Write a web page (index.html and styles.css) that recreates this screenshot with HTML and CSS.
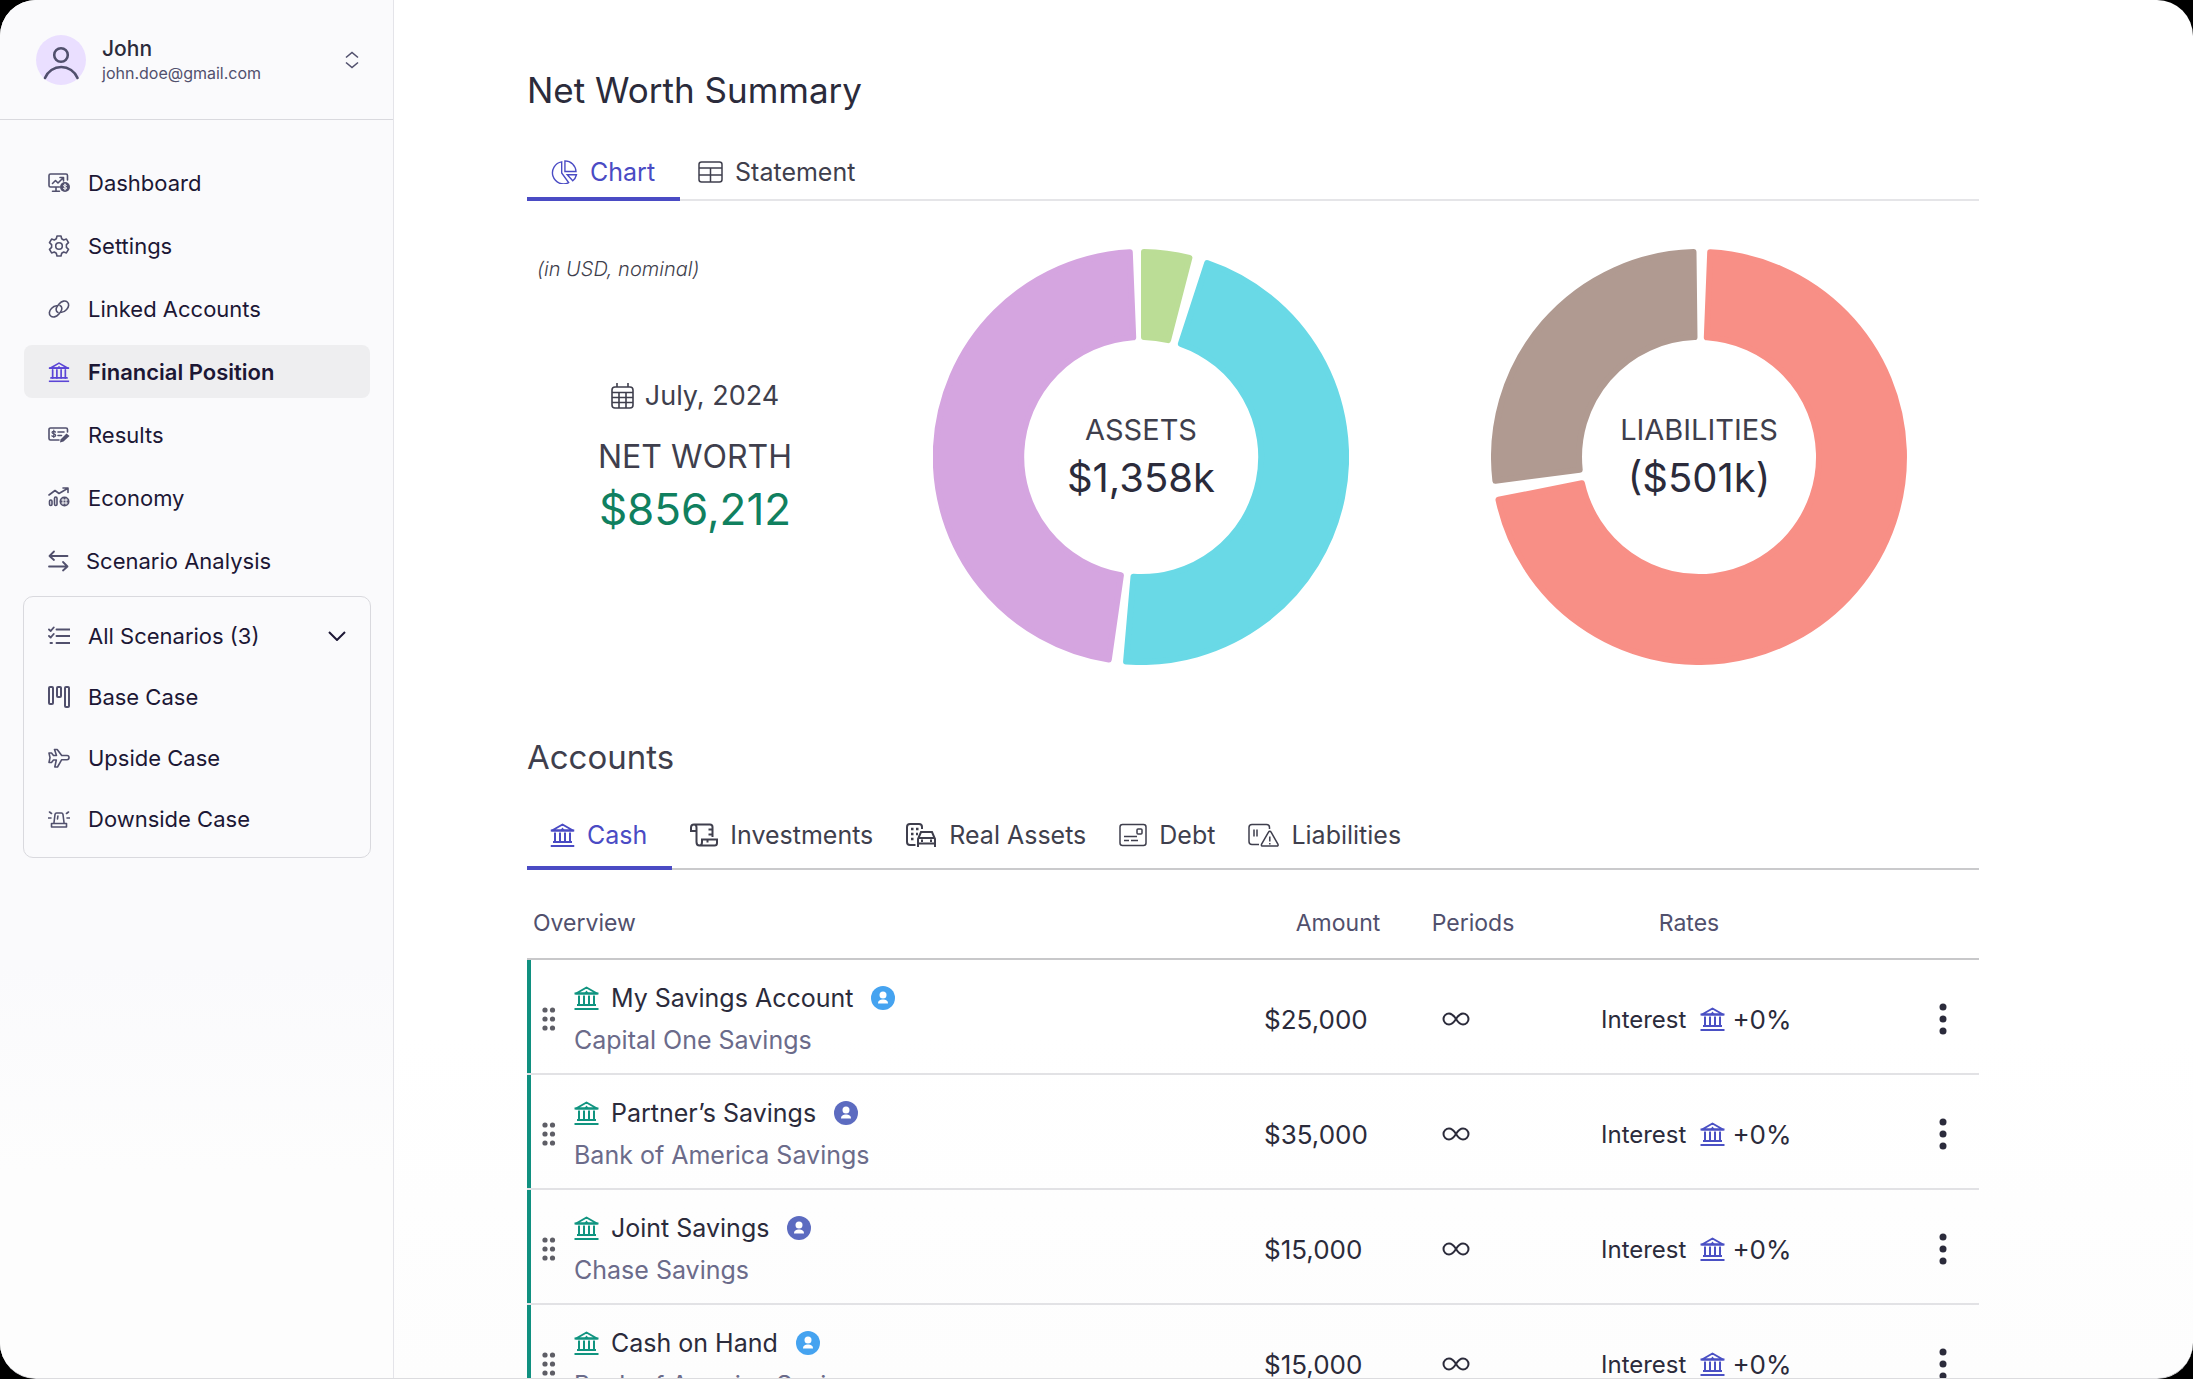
FILE: index.html
```html
<!DOCTYPE html>
<html lang="en">
<head>
<meta charset="utf-8">
<title>Net Worth Summary</title>
<link rel="stylesheet" href="styles.css">
</head>
<body>
<svg class="sprite" aria-hidden="true">
  <symbol id="bank" viewBox="0 0 24 24">
    <path d="M1.5 7.5 12 1.5l10.500 6z" fill="none" stroke="currentColor" stroke-width="2" stroke-linejoin="round"/>
    <path d="M12 4.500l2 2.500h-4z" fill="currentColor"/>
    <path d="M0 7.500h24M2.500 19h19M0 23h24" stroke="currentColor" stroke-width="2"/>
    <path d="M4.500 9.500V19M9.500 9.500V19M14.500 9.500V19M19.500 9.500V19" stroke="currentColor" stroke-width="2"/>
  </symbol>
  <symbol id="person" viewBox="0 0 24 24">
    <circle cx="12" cy="12" r="12" fill="currentColor"/>
    <circle cx="12" cy="9" r="3.500" fill="#fff"/>
    <path d="M7 17.500c0-3 2.200-4 5-4s5 1 5 4z" fill="#fff"/>
  </symbol>
  <symbol id="grip" viewBox="0 0 14 24">
    <g fill="currentColor"><circle cx="3" cy="3" r="2.600"/><circle cx="10.500" cy="3" r="2.600"/><circle cx="3" cy="12" r="2.600"/><circle cx="10.500" cy="12" r="2.600"/><circle cx="3" cy="21" r="2.600"/><circle cx="10.500" cy="21" r="2.600"/></g>
  </symbol>
  <symbol id="infinity" viewBox="0 0 28 16">
    <path d="M14 8C11.500 4 9.500 2.500 7 2.500a5.500 5.500 0 0 0 0 11c2.500 0 4.500-1.500 7-5.500s4.500-5.500 7-5.500a5.500 5.500 0 0 1 0 11c-2.500 0-4.500-1.500-7-5.500z" fill="none" stroke="currentColor" stroke-width="2"/>
  </symbol>
  <symbol id="kebab" viewBox="0 0 8 32">
    <g fill="currentColor"><circle cx="4" cy="4" r="3.500"/><circle cx="4" cy="16" r="3.500"/><circle cx="4" cy="28" r="3.500"/></g>
  </symbol>
</svg>

<div class="app">
  <aside class="sidebar">
    <button class="profile" type="button">
      <svg class="avatar" viewBox="0 0 50 50" aria-hidden="true">
        <circle cx="25" cy="25" r="25" fill="#eadfff"/>
        <g fill="none" stroke="#51506d" stroke-width="2.600" stroke-linecap="round"><circle cx="25" cy="20" r="6.800"/><path d="M9 43a17.500 17.500 0 0 1 32.500 0"/></g>
      </svg>
      <span class="profile-text">
        <span class="profile-name">John</span>
        <span class="profile-mail">john.doe@gmail.com</span>
      </span>
      <svg class="profile-switch" viewBox="0 0 14 18" aria-hidden="true"><path d="M1 6.500 7 1.500l6 5M1 11.500l6 5 6-5" fill="none" stroke="currentColor" stroke-width="1.600"/></svg>
    </button>

    <nav class="nav" aria-label="Main">
      <a class="nav-item" href="#dashboard">
        <svg class="nav-icon" viewBox="0 0 22 22" aria-hidden="true"><path d="M11.500 15H2.500A1.500 1.500 0 0 1 1 13.500v-10A1.500 1.500 0 0 1 2.500 2h15.500A1.500 1.500 0 0 1 19.500 3.500V8M8 15v4M4.500 19.300h7M4.500 11.500l3-3 2.500 2.500 5-5M12 5.500h3.500V9"/><circle cx="17" cy="15" r="5" class="solid"/><path class="cut" d="M18.500 13.300c-.8-.8-3-.7-3 .4 0 1.500 3.200.8 3.200 2.400 0 1.200-2.400 1.200-3.300.3M17 12v6"/></svg>
        Dashboard
      </a>
      <a class="nav-item" href="#settings">
        <svg class="nav-icon" viewBox="0 0 22 22" aria-hidden="true"><circle cx="11" cy="11" r="3.300"/><path d="M9 1h4l.7 2.800 2 1.200 2.700-.9 2.100 3.500-2.100 2v2.800l2.100 2-2.100 3.500-2.700-.9-2 1.200L13 21H9l-.7-2.800-2-1.200-2.700.9-2.100-3.500 2.100-2V9.600l-2.100-2 2.100-3.500L6.300 5l2-1.200z"/></svg>
        Settings
      </a>
      <a class="nav-item" href="#linked">
        <svg class="nav-icon" viewBox="0 0 22 22" aria-hidden="true"><path d="M10 14.500c-2.200-1-2.500-4-.5-6.500l1.800-2.200c2.500-3 6-3.500 8-1.800s1.800 4.800-.7 7.500c-1.500 1.700-3.500 3-5.600 2.800"/><path d="M12 7.500c2.200 1 2.500 4 .5 6.500l-1.800 2.200c-2.500 3-6 3.500-8 1.800S.9 13.200 3.400 10.500C4.900 8.800 6.900 7.500 9 7.700"/></svg>
        Linked Accounts
      </a>
      <a class="nav-item is-active" href="#position" aria-current="page">
        <svg class="nav-icon" viewBox="-1 -1 26 26" aria-hidden="true"><use href="#bank" width="24" height="24"/></svg>
        Financial Position
      </a>
      <a class="nav-item" href="#results">
        <svg class="nav-icon" viewBox="0 0 22 22" aria-hidden="true"><path d="M11 16H2.500A1.500 1.500 0 0 1 1 14.500v-9A1.500 1.500 0 0 1 2.500 4h15.500A1.500 1.500 0 0 1 19.500 5.500V8M10 8h6M10 11.500h3.500"/><path d="M7.500 8c-1-.9-3.500-.8-3.500.6 0 1.700 3.700.9 3.700 2.800 0 1.400-2.800 1.400-3.900.4M5.800 6v7.500" stroke-width="1.200"/><path class="solid" d="m12.500 15.500 6-6 3 2.500-6 5.500-3.500 1z"/></svg>
        Results
      </a>
      <a class="nav-item" href="#economy">
        <svg class="nav-icon" viewBox="0 0 22 22" aria-hidden="true"><path d="M1 8l6-4.500 4 3 8.500-5M15 1h5v4.500"/><rect x="1.500" y="13" width="2.500" height="5.500" rx="1.200"/><rect x="6.500" y="10" width="2.500" height="8.500" rx="1.200"/><circle cx="16.500" cy="14.500" r="5" class="solid"/><path class="cut" d="M15 11.800v5.400M18 11.800v5.400M13.800 13h5.400M13.800 16h5.400"/></svg>
        Economy
      </a>
      <a class="nav-item nav-item-tight" href="#scenarios">
        <svg class="nav-icon" viewBox="0 0 22 22" aria-hidden="true"><path d="M19.500 6H1.500M6 1.500 1.500 6 6 10M1 16.500h18.500M15 12l4.500 4.500-4.500 4" stroke-width="1.800"/></svg>
        Scenario Analysis
      </a>
    </nav>

    <nav class="scenarios" aria-label="Scenarios">
      <button class="scenario" type="button" aria-expanded="true">
        <svg class="nav-icon" viewBox="0 0 22 22" aria-hidden="true"><path d="M8.500 4.500H22M8.500 11H22M8.500 18H22M1 4.500 2.700 6l3-3.500M1 11l1.700 1.500 3-3.500M2.500 18h1.500" stroke-width="1.900"/></svg>
        All Scenarios (3)
        <svg class="scenario-chevron" viewBox="0 0 18 10" aria-hidden="true"><path d="m1 1 8 8 8-8" fill="none" stroke="currentColor" stroke-width="2"/></svg>
      </button>
      <a class="scenario" href="#base">
        <svg class="nav-icon" viewBox="0 0 22 22" aria-hidden="true"><g stroke-width="2"><rect x="1" y="1" width="4" height="17" rx="1"/><rect x="9" y="1" width="4" height="10" rx="1"/><rect x="17" y="1" width="4" height="20" rx="1"/></g></svg>
        Base Case
      </a>
      <a class="scenario" href="#upside">
        <svg class="nav-icon" viewBox="0 0 22 22" aria-hidden="true"><path d="M8.500 8.500 6.500 2.500h2.700l4.500 6H19c2.700 0 2.700 4.200 0 4.200h-5.300L9.500 20H6.800l1.500-7H5.500l-2 2.500H1L2 10.600 1 6h2.500l2 2.500z"/></svg>
        Upside Case
      </a>
      <a class="scenario" href="#downside">
        <svg class="nav-icon" viewBox="0 0 22 22" aria-hidden="true"><path d="M6 14.500 7 6.500C7.200 5.500 7.500 5 8.500 5h5c1 0 1.300.5 1.500 1.500l1 8M9.500 11l.4-3M3.500 15.500h15V19h-15zM.5 10H3M19 10h2.500M1.500 4 3.500 5.500M20.500 4l-2 1.500"/></svg>
        Downside Case
      </a>
    </nav>
  </aside>

  <main class="main">
    <section class="summary">
      <h1 class="title">Net Worth Summary</h1>
      <div class="tabs tabs-summary" role="tablist">
        <button class="tab is-active" role="tab" aria-selected="true" type="button">
          <svg class="tab-icon tab-icon-wide" viewBox="0 0 28 26" aria-hidden="true"><path d="M11.500 2A12 12 0 1 0 19 24.500L11.500 14zM15 1v11.500h12A12 12 0 0 0 15 1zM17.500 16H27.500a12 12 0 0 1-4 6.500z"/></svg>
          Chart
        </button>
        <button class="tab" role="tab" aria-selected="false" type="button">
          <svg class="tab-icon" viewBox="0 0 25 24" aria-hidden="true"><rect x="1" y="2" width="23" height="20" rx="2.500"/><path d="M1 8h23M1 15h23M12.500 8v14"/></svg>
          Statement
        </button>
      </div>

      <div class="figures">
        <div class="net">
          <p class="unit-note">(in USD, nominal)</p>
          <div class="net-block">
            <p class="net-date">
              <svg class="calendar" viewBox="0 0 24 26" aria-hidden="true"><rect x="1" y="4" width="21" height="21" rx="3"/><path d="M1 9.500h21M1 14.500h21M1 19.500h21M8 9.500V25M15 9.500V25M6 0v4M17 0v4"/></svg>
              July, 2024
            </p>
            <p class="net-label">NET WORTH</p>
            <p class="net-value">$856,212</p>
          </div>
        </div>
        <div class="donut">
          <svg class="donut-chart" viewBox="0 0 416 416" role="img" aria-label="Assets breakdown">
            <path class="slice slice-green" d="M211 3A205 205 0 0 1 256.400 8.800L235.100 91.100A120 120 0 0 0 211 88z"/>
            <path class="slice slice-cyan" d="M274.200 14A205 205 0 0 1 193.100 412.500L200.500 327.800A120 120 0 0 0 247.900 94.800z"/>
            <path class="slice slice-purple" d="M175.800 410.500A205 205 0 0 1 196.800 3.300L200.200 88.300A120 120 0 0 0 187.900 326.300z"/>
          </svg>
          <div class="donut-text"><span class="donut-label">ASSETS</span><span class="donut-value">$1,358k</span></div>
        </div>
        <div class="donut">
          <svg class="donut-chart" viewBox="0 0 416 416" role="img" aria-label="Liabilities breakdown">
            <path class="slice slice-red" d="M219.200 3.300A205 205 0 1 1 7.500 250.800L90.900 234.200A120 120 0 1 0 215.800 88.300z"/>
            <path class="slice slice-brown" d="M4.400 231.800A205 205 0 0 1 202.500 3.100L203.500 88.100A120 120 0 0 0 88.700 220.700z"/>
          </svg>
          <div class="donut-text"><span class="donut-label">LIABILITIES</span><span class="donut-value">($501k)</span></div>
        </div>
      </div>
    </section>

    <section class="accounts">
      <h2 class="title subtitle">Accounts</h2>
      <div class="tabs tabs-accounts" role="tablist">
        <button class="tab is-active" role="tab" aria-selected="true" type="button">
          <svg class="tab-icon" viewBox="0 0 24 24" aria-hidden="true"><use href="#bank"/></svg>
          Cash
        </button>
        <button class="tab" role="tab" aria-selected="false" type="button">
          <svg class="tab-icon tab-icon-wide" viewBox="0 0 28 24" aria-hidden="true"><g stroke-width="2"><path d="M6.500 8H1V4.500C1 2.500 2 1.500 4 1.500H20c2 0 2.500 1 2.500 2.500V14M4 1.500c2 0 2.500 1 2.500 3V19c0 2.500 1 3.500 3 3.500h15c2 0 2.500-.5 2.500-2.500V16.500H12V19c0 2.500-1 3.500-2.500 3.500M18.500 6.500H22M18.500 11.500H22M17.500 19.500v-3"/></g></svg>
          Investments
        </button>
        <button class="tab" role="tab" aria-selected="false" type="button">
          <svg class="tab-icon tab-icon-xl" viewBox="0 0 31 24" aria-hidden="true"><g stroke-width="2"><path d="M9.500 22H4C2 22 1 21 1 19V4C1 2 2 1 4 1h9c2 0 3 1 3 3v2"/><path d="M12 24v-8l3-7h11l3 7v8M12 20.500h17M12 15h17"/><path d="M5 6h2.500M5 11h2.500M5 16h2.500M10 6h2.500M10 11h2M15 17.700h2M24 17.700h2" stroke-width="2.600"/></g></svg>
          Real Assets
        </button>
        <button class="tab" role="tab" aria-selected="false" type="button">
          <svg class="tab-icon tab-icon-wide" viewBox="0 0 28 24" aria-hidden="true"><rect x="1" y="1.500" width="26" height="21" rx="2.500"/><rect x="18" y="6" width="5" height="5" rx="1"/><path d="M5 13.500h13M5 17.500h5M12 17.500h7"/></svg>
          Debt
        </button>
        <button class="tab" role="tab" aria-selected="false" type="button">
          <svg class="tab-icon tab-icon-xl" viewBox="0 0 31 24" aria-hidden="true"><path d="M11 21.500H4C2 21.500 1 20.500 1 18.500V4.500C1 2.500 2 1.500 4 1.500h14.500c2 0 3 1 3 3V6M6 6.500v7M9 6.500v7M20.500 9.200c.6-1.200 2-1.200 2.600 0l6.800 12c.6 1.200 0 1.900-1 1.900H14.600c-1 0-1.600-.7-1-1.900zM21.800 13.500v5M21.800 20v1.500"/></svg>
          Liabilities
        </button>
      </div>

      <table class="table">
        <colgroup><col><col class="col-amount"><col class="col-periods"><col class="col-rates"><col class="col-menu"></colgroup>
        <thead>
          <tr><th class="th-overview" scope="col">Overview</th><th scope="col">Amount</th><th scope="col">Periods</th><th scope="col">Rates</th><th scope="col" aria-label="Actions"></th></tr>
        </thead>
        <tbody>
          <tr>
            <td class="overview"><div class="account"><svg class="grip" aria-hidden="true"><use href="#grip"/></svg><div class="account-text"><div class="account-name"><svg class="bank" aria-hidden="true"><use href="#bank"/></svg>My Savings Account<svg class="owner owner-me" aria-hidden="true"><use href="#person"/></svg></div><div class="account-bank">Capital One Savings</div></div></div></td>
            <td class="amount">$25,000</td>
            <td class="periods"><svg class="infinity" role="img" aria-label="Indefinite"><use href="#infinity"/></svg></td>
            <td class="rates"><div class="rate">Interest<svg class="bank" aria-hidden="true"><use href="#bank"/></svg><span class="rate-value">+0%</span></div></td>
            <td class="menu"><button class="menu-button" type="button" aria-label="Account actions"><svg class="kebab" aria-hidden="true"><use href="#kebab"/></svg></button></td>
          </tr>
          <tr>
            <td class="overview"><div class="account"><svg class="grip" aria-hidden="true"><use href="#grip"/></svg><div class="account-text"><div class="account-name"><svg class="bank" aria-hidden="true"><use href="#bank"/></svg>Partner’s Savings<svg class="owner owner-partner" aria-hidden="true"><use href="#person"/></svg></div><div class="account-bank">Bank of America Savings</div></div></div></td>
            <td class="amount">$35,000</td>
            <td class="periods"><svg class="infinity" role="img" aria-label="Indefinite"><use href="#infinity"/></svg></td>
            <td class="rates"><div class="rate">Interest<svg class="bank" aria-hidden="true"><use href="#bank"/></svg><span class="rate-value">+0%</span></div></td>
            <td class="menu"><button class="menu-button" type="button" aria-label="Account actions"><svg class="kebab" aria-hidden="true"><use href="#kebab"/></svg></button></td>
          </tr>
          <tr>
            <td class="overview"><div class="account"><svg class="grip" aria-hidden="true"><use href="#grip"/></svg><div class="account-text"><div class="account-name"><svg class="bank" aria-hidden="true"><use href="#bank"/></svg>Joint Savings<svg class="owner owner-partner" aria-hidden="true"><use href="#person"/></svg></div><div class="account-bank">Chase Savings</div></div></div></td>
            <td class="amount">$15,000</td>
            <td class="periods"><svg class="infinity" role="img" aria-label="Indefinite"><use href="#infinity"/></svg></td>
            <td class="rates"><div class="rate">Interest<svg class="bank" aria-hidden="true"><use href="#bank"/></svg><span class="rate-value">+0%</span></div></td>
            <td class="menu"><button class="menu-button" type="button" aria-label="Account actions"><svg class="kebab" aria-hidden="true"><use href="#kebab"/></svg></button></td>
          </tr>
          <tr>
            <td class="overview"><div class="account"><svg class="grip" aria-hidden="true"><use href="#grip"/></svg><div class="account-text"><div class="account-name"><svg class="bank" aria-hidden="true"><use href="#bank"/></svg>Cash on Hand<svg class="owner owner-me" aria-hidden="true"><use href="#person"/></svg></div><div class="account-bank">Bank of America Savings</div></div></div></td>
            <td class="amount">$15,000</td>
            <td class="periods"><svg class="infinity" role="img" aria-label="Indefinite"><use href="#infinity"/></svg></td>
            <td class="rates"><div class="rate">Interest<svg class="bank" aria-hidden="true"><use href="#bank"/></svg><span class="rate-value">+0%</span></div></td>
            <td class="menu"><button class="menu-button" type="button" aria-label="Account actions"><svg class="kebab" aria-hidden="true"><use href="#kebab"/></svg></button></td>
          </tr>
        </tbody>
      </table>
    </section>
  </main>
</div>
</body>
</html>
```
FILE: styles.css
```css
* { box-sizing: border-box; }
html, body { height: 100%; }
body {
  margin: 0;
  background: #000;
  color: #2b2b3b;
  font-family: Inter, "Liberation Sans", sans-serif;
  font-size: 25px;
  overflow: hidden;
}
h1, h2, p { margin: 0; font-weight: 400; }
button { border: 0; background: none; padding: 0; color: inherit; font: inherit; text-align: left; }
a { color: inherit; text-decoration: none; }
svg { flex: none; display: block; }
.sprite { position: absolute; width: 0; height: 0; }

.app {
  display: flex;
  height: 100vh;
  overflow: hidden;
  border-radius: 36px;
  border-bottom: 1px solid #dcdcdf;
  background: linear-gradient(#fff 75%, #fdfdfd);
}

/* Sidebar */
.sidebar {
  flex: none;
  width: 394px;
  border-right: 1px solid #e4e4e9;
  background: linear-gradient(#fafafc 70%, #fdfdfd 85%);
}
.profile {
  display: flex;
  align-items: center;
  gap: 16px;
  width: 100%;
  height: 120px;
  padding: 0 34px 0 36px;
  border-bottom: 1px solid #d9d9de;
}
.avatar { width: 50px; height: 50px; }
.profile-text { flex: 1; display: flex; flex-direction: column; padding-top: 2px; }
.profile-name { font-size: 21px; line-height: 25px; font-weight: 500; color: #2b2b3b; }
.profile-mail { font-size: 16px; line-height: 25px; color: #51506d; }
.profile-switch { width: 14px; height: 18px; color: #51506d; }

.nav { display: flex; flex-direction: column; gap: 10px; padding: 36px 23px 9px 24px; }
.nav-item, .scenario {
  display: flex;
  align-items: center;
  gap: 18px;
  width: 100%;
  padding: 0 24px;
  color: #1c1735;
  font-size: 22px;
}
.nav-item { height: 53px; border-radius: 8px; }
.nav-item-tight { gap: 16px; }
.nav-item.is-active { background: #eeeef0; font-weight: 600; }
.nav-icon { width: 22px; height: 22px; fill: none; stroke: #51506d; stroke-width: 1.6; stroke-linecap: round; stroke-linejoin: round; }
.nav-icon .solid { fill: #51506d; stroke: none; }
.nav-icon .cut { stroke: #fafafc; stroke-width: 1; }
.is-active .nav-icon { color: #5b45d6; stroke: none; }

.scenarios {
  margin: 0 22px 0 23px;
  padding: 8px 0;
  border: 1px solid #d9d9de;
  border-radius: 10px;
}
.scenario { height: 61px; }
.scenario-chevron { width: 18px; height: 10px; margin-left: auto; }

/* Main column */
.main { flex: 1; min-width: 0; padding: 64px 214px 0 133px; }
.title { font-size: 35px; line-height: 52px; }
.subtitle { font-size: 33px; line-height: 48px; color: #3f3f4d; }

.tabs { display: flex; align-items: stretch; border-bottom: 2px solid #e5e5e8; color: #3f3f4d; }
.tab { display: flex; align-items: center; gap: 12px; padding: 5px 15px 0 18px; border-bottom: 4px solid transparent; margin-bottom: -2px; white-space: nowrap; }
.tab.is-active { padding: 5px 25px 0 23px; border-bottom-color: #4a4bc4; color: #4a4bc4; }
.tab-icon { width: 25px; height: 24px; fill: none; stroke: currentColor; stroke-width: 1.5; }
.tab-icon-wide { width: 28px; }
.tab-icon-xl { width: 31px; }
.is-active .tab-icon use { stroke: none; }
.tabs-summary { height: 60px; margin-top: 25px; }
.tabs-accounts { height: 72px; margin-top: 17px; border-bottom-color: #cacacc; }

.figures { display: flex; padding: 48px 72px 0 0; }
.net { flex: none; width: 406px; padding: 0 80px 0 10px; }
.unit-note { font-size: 20px; line-height: 40px; font-style: italic; font-weight: 300; color: #3f3f4d; }
.net-block { display: flex; flex-direction: column; align-items: center; padding-top: 85px; color: #3f3f4d; }
.net-date { display: flex; align-items: center; gap: 10px; font-size: 27px; line-height: 44px; }
.calendar { width: 24px; height: 26px; fill: none; stroke: currentColor; stroke-width: 1.6; }
.net-label { font-size: 32px; line-height: 48px; margin-top: 15px; }
.net-value { font-size: 44px; line-height: 56px; color: #10805f; }

.donut { display: grid; width: 416px; }
.donut + .donut { margin-left: auto; }
.donut > * { grid-area: 1 / 1; }
.donut-chart { width: 100%; }
.slice { stroke-width: 6; stroke-linejoin: round; }
.slice-green { fill: #bbdd96; stroke: #bbdd96; }
.slice-cyan { fill: #69d9e6; stroke: #69d9e6; }
.slice-purple { fill: #d5a5e0; stroke: #d5a5e0; }
.slice-red { fill: #f88f86; stroke: #f88f86; }
.slice-brown { fill: #b09a91; stroke: #b09a91; }
.donut-text { display: flex; flex-direction: column; align-items: center; justify-content: center; padding-bottom: 2px; }
.donut-label { font-size: 29px; line-height: 44px; color: #3f3f4d; }
.donut-value { font-size: 40px; line-height: 52px; }

.accounts { padding-top: 68px; }

/* Accounts table */
.table { width: 100%; table-layout: fixed; border-collapse: separate; border-spacing: 0; white-space: nowrap; }
.col-amount { width: 148px; }
.col-periods { width: 122px; }
.col-rates { width: 310px; }
.col-menu { width: 135px; }
.table th { height: 90px; padding: 19px 0 2px; border-bottom: 2px solid #c8c8ca; font-size: 23px; font-weight: 400; color: #51506d; }
.table th.th-overview { padding-left: 6px; text-align: left; }
.table td { height: 115px; padding: 5px 0 0; border-bottom: 2px solid #e2e2e5; }
.table td.overview { padding: 0; }
.account { display: flex; align-items: center; gap: 18px; height: 113px; padding: 5px 0 0 11px; border-left: 4px solid #109080; }
.grip { width: 14px; height: 24px; color: #5e5e66; }
.account-name { display: flex; align-items: center; gap: 12px; line-height: 42px; }
.account-bank { line-height: 42px; color: #6b6b8a; }
.bank { width: 25px; height: 24px; color: #109480; }
.owner { width: 24px; height: 24px; margin-left: 6px; }
.owner-me { color: #45a3f0; }
.owner-partner { color: #5c6bc0; }
.amount, .rate-value { font-size: 26px; }
.table td.periods { padding-left: 30px; }
.infinity { width: 28px; height: 16px; }
.table td.rates { padding-left: 67px; }
.rate { display: flex; align-items: center; gap: 7px; font-size: 24px; }
.rate .bank { margin-left: 7px; color: #4a50c4; }
.menu-button { display: block; margin-left: auto; margin-right: 32px; }
.kebab { width: 8px; height: 32px; }
```
